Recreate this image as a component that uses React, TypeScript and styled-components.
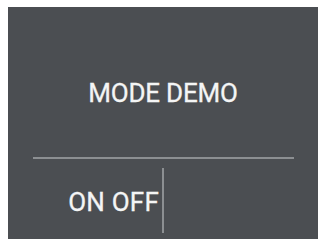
import { createGlobalStyle, styled } from "styled-components";

const GlobalStyle = createGlobalStyle`
  html, body {
    margin: 0;
    padding: 0;
    background: #ffffff;
  }
  body {
    width: 320px;
    height: 242px;
    overflow: hidden;
    font-family: Roboto, "Liberation Sans", sans-serif;
  }
`;

const Screen = styled.div`
  width: 320px;
  height: 242px;
  padding: 7px 2px 3px 8px;
  box-sizing: border-box;
`;

const Panel = styled.div`
  width: 100%;
  height: 100%;
  background: #4b4e52;
  display: flex;
  flex-direction: column;
  color: #f4f5f5;
`;

const Title = styled.div`
  height: 150px;
  display: flex;
  align-items: center;
  justify-content: center;
  padding-top: 22px;
  box-sizing: border-box;
  font-size: 26px;
  letter-spacing: -0.2px;
  -webkit-text-stroke: 0.3px #f4f5f5;
`;

const Divider = styled.div`
  height: 2px;
  margin: 0 24px 0 25px;
  background: #8c8f92;
`;

const Footer = styled.div`
  flex: 1;
  display: flex;
  padding: 9px 0 6px 0;
`;

const Option = styled.div`
  width: 154px;
  display: flex;
  align-items: center;
  justify-content: flex-end;
  padding: 2px 3px 0 0;
  box-sizing: border-box;
  font-size: 26px;
  letter-spacing: 0.2px;
  -webkit-text-stroke: 0.3px #f4f5f5;
`;

const Separator = styled.div`
  width: 2px;
  background: #8c8f92;
`;

export default function App() {
  return (
    <>
      <GlobalStyle />
      <Screen>
        <Panel>
          <Title>MODE DEMO</Title>
          <Divider />
          <Footer>
            <Option>ON OFF</Option>
            <Separator />
          </Footer>
        </Panel>
      </Screen>
    </>
  );
}
